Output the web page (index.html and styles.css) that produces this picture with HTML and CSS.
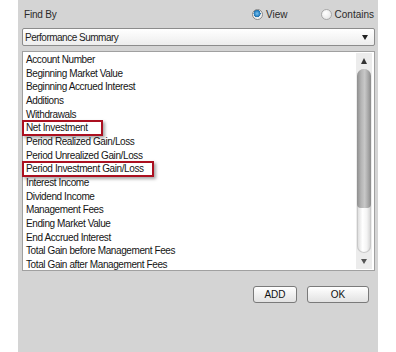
FILE: index.html
```html
<!DOCTYPE html>
<html>
<head>
<meta charset="utf-8">
<link rel="stylesheet" href="styles.css">
</head>
<body>
<div class="panel">
  <div class="header">
    <span class="label">Find By</span>
    <span class="radios">
      <label class="radio"><span class="dot dot-on"></span>View</label>
      <label class="radio"><span class="dot"></span>Contains</label>
    </span>
  </div>
  <div class="select">
    <span>Performance Summary</span>
    <span class="caret"></span>
  </div>
  <div class="list">
    <ul class="items">
      <li>Account Number</li>
      <li>Beginning Market Value</li>
      <li>Beginning Accrued Interest</li>
      <li>Additions</li>
      <li>Withdrawals</li>
      <li><span class="hl hl-a">Net Investment</span></li>
      <li>Period Realized Gain/Loss</li>
      <li>Period Unrealized Gain/Loss</li>
      <li><span class="hl hl-b">Period Investment Gain/Loss</span></li>
      <li>Interest Income</li>
      <li>Dividend Income</li>
      <li>Management Fees</li>
      <li>Ending Market Value</li>
      <li>End Accrued Interest</li>
      <li>Total Gain before Management Fees</li>
      <li>Total Gain after Management Fees</li>
    </ul>
    <div class="scrollbar">
      <span class="arrow arrow-up"></span>
      <div class="track">
        <div class="thumb"></div>
      </div>
      <span class="arrow arrow-down"></span>
    </div>
  </div>
  <div class="footer">
    <button class="btn btn-add">ADD</button>
    <button class="btn btn-ok">OK</button>
  </div>
</div>
</body>
</html>
```
FILE: styles.css
```css
html, body {
  margin: 0;
  padding: 0;
  background: #ffffff;
}
body {
  width: 396px;
  height: 352px;
  overflow: hidden;
  font-family: "Liberation Sans", Arial, sans-serif;
  font-size: 10px;
  color: #151515;
}
.panel {
  margin-left: 18px;
  width: 360px;
  height: 352px;
  background: #d4d4d4;
  box-sizing: border-box;
  padding: 0 3px 0 4px;
}
.header {
  height: 28px;
  display: flex;
  align-items: center;
  justify-content: space-between;
  padding-left: 2px;
  padding-right: 1px;
}
.label {
  color: #2a2a2a;
  letter-spacing: -0.2px;
}
.radios {
  display: flex;
  gap: 33px;
}
.radio {
  display: flex;
  align-items: center;
  gap: 3px;
  color: #2a2a2a;
}
.dot {
  width: 9px;
  height: 9px;
  border-radius: 50%;
  border: 1px solid #a8a8a8;
  background: radial-gradient(circle at 40% 35%, #ffffff, #e0e0e0);
}
.dot-on {
  border-color: #8a8a8a;
  background: radial-gradient(circle at 45% 40%, #7fc4ef 0, #2d86c6 2.5px, #1e6ea8 3.5px, #e6e6e6 3.6px, #f4f4f4 5px);
}
.select {
  height: 18px;
  box-sizing: border-box;
  border: 1px solid #8c8c8c;
  border-radius: 2px;
  background: linear-gradient(#ffffff, #ededed);
  display: flex;
  align-items: center;
  justify-content: space-between;
  padding: 0 6px 0 2px;
  color: #222;
  letter-spacing: -0.5px;
}
.caret {
  width: 0;
  height: 0;
  border-left: 3px solid transparent;
  border-right: 3px solid transparent;
  border-top: 5px solid #222;
}
.list {
  margin-top: 5px;
  height: 220px;
  box-sizing: border-box;
  border: 1px solid #a0a0a0;
  background: #ffffff;
  display: flex;
}
.items {
  list-style: none;
  margin: 0;
  padding: 1px 0 0 3px;
  flex: 1;
  letter-spacing: -0.4px;
}
.items li {
  height: 13.67px;
  line-height: 13.67px;
  white-space: nowrap;
}
.hl {
  position: relative;
  display: inline-block;
}
.hl::after {
  content: "";
  position: absolute;
  left: -4px;
  top: -1px;
  bottom: -1px;
  box-sizing: border-box;
  border: 2px solid #ab1020;
  box-shadow: 2px 2px 3px rgba(0, 0, 0, 0.35);
}
.hl-a::after {
  width: 81px;
}
.hl-b::after {
  width: 132px;
}
.scrollbar {
  width: 16px;
  margin: 1px 2px 1px 0;
  background: #ececec;
  display: flex;
  flex-direction: column;
  align-items: center;
}
.arrow {
  width: 0;
  height: 0;
  border-left: 3px solid transparent;
  border-right: 3px solid transparent;
}
.arrow-up {
  margin-top: 5px;
  border-bottom: 6px solid #333;
}
.arrow-down {
  margin-bottom: 5px;
  border-top: 5px solid #555;
}
.track {
  flex: 1;
  width: 14px;
  margin: 5px 0 6px;
  border-radius: 7px;
  background: linear-gradient(90deg, #d8d8d8, #ffffff 40%, #f4f4f4 70%, #cfcfcf);
  box-shadow: inset 0 0 0 1px #c8c8c8;
  display: flex;
  flex-direction: column;
}
.thumb {
  height: 139px;
  border-radius: 7px 7px 4px 4px;
  background: linear-gradient(90deg, #8e8e8e, #b5b5b5 30%, #c8c8c8 55%, #a8a8a8 80%, #8a8a8a);
}
.footer {
  display: flex;
  justify-content: flex-end;
  gap: 10px;
  padding: 15px 6px 0 0;
}
.btn {
  height: 17px;
  box-sizing: border-box;
  border: 1px solid #7a7a7a;
  border-radius: 3px;
  background: linear-gradient(#ffffff, #e2e2e2);
  font-family: "Liberation Sans", Arial, sans-serif;
  font-size: 10px;
  color: #111;
  padding: 0;
  line-height: 15px;
}
.btn-add {
  width: 44px;
}
.btn-ok {
  width: 62px;
}
```
